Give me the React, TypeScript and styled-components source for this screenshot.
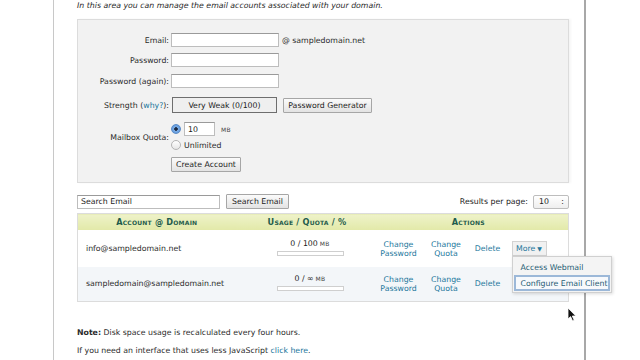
import React from 'react';
import styled, { createGlobalStyle } from 'styled-components';

interface Account {
  email: string;
  quota: string;
}

const accounts: Account[] = [
  { email: 'info@sampledomain.net', quota: '100' },
  { email: 'sampledomain@sampledomain.net', quota: '∞' },
];

const GlobalStyle = createGlobalStyle`
  html, body {
    margin: 0;
    padding: 0;
    background: #ffffff;
  }
  body {
    font-family: "DejaVu Sans", Verdana, sans-serif;
    font-size: 7.8px;
    color: #222;
  }
`;

const Page = styled.div`
  position: relative;
  margin-left: 53px;
  width: 492px;
  min-height: 360px;
  padding: 0 15px 0 23px;
  border-left: 1px solid #c8c8c8;
  border-right: 2px solid #a8a8a8;
`;

const Intro = styled.p`
  margin: 0;
  padding-top: 1px;
  height: 18px;
  font-style: italic;
  color: #2a2a2a;
`;

const FormBox = styled.div`
  box-sizing: border-box;
  height: 164px;
  background: #f2f2f2;
  border: 1px solid #dcdcdc;
  box-shadow: 2px 0 2px rgba(0, 0, 0, 0.04);
  padding-top: 10px;
  display: grid;
  grid-template-columns: 91px 1fr;
  column-gap: 2px;
  align-content: start;
`;

const Label = styled.div<{ $h: number }>`
  height: ${p => p.$h}px;
  display: flex;
  align-items: center;
  justify-content: flex-end;
  color: #2a2a2a;
`;

const Field = styled.div<{ $h: number }>`
  height: ${p => p.$h}px;
  display: flex;
  align-items: center;
  gap: 3px;
`;

const Input = styled.div<{ $w: number }>`
  box-sizing: border-box;
  width: ${p => p.$w}px;
  height: 14px;
  background: #fff;
  border: 1px solid #bdbdbd;
  border-top-color: #9a9a9a;
  padding-left: 3px;
  display: flex;
  align-items: center;
  color: #222;
`;

const Domain = styled.span`
  color: #2a2a2a;
`;

const Link = styled.a`
  color: #23779c;
  text-decoration: none;
`;

const StrengthBox = styled.div`
  box-sizing: border-box;
  width: 105px;
  height: 16px;
  margin-left: 1px;
  margin-right: 3px;
  border: 1px solid #6e6e6e;
  background: #efefef;
  display: flex;
  align-items: center;
  justify-content: center;
  color: #222;
`;

const Button = styled.div<{ $w: number }>`
  box-sizing: border-box;
  width: ${p => p.$w}px;
  height: 15px;
  background: linear-gradient(#fbfbfb, #e3e3e3);
  border: 1px solid #a6a6a6;
  border-radius: 1px;
  display: flex;
  align-items: center;
  justify-content: center;
  color: #222;
  white-space: nowrap;
`;

const QuotaOptions = styled.div`
  height: 38px;
  display: flex;
  flex-direction: column;
  justify-content: center;
  gap: 2px;
`;

const RadioRow = styled.div`
  display: flex;
  align-items: center;
  height: 14px;
  gap: 3px;
  color: #2a2a2a;
`;

const Radio = styled.span<{ $on?: boolean }>`
  box-sizing: border-box;
  width: 10px;
  height: 10px;
  border-radius: 50%;
  border: 1px solid ${p => (p.$on ? '#5a8cc8' : '#b4b4b4')};
  background: ${p =>
    p.$on
      ? 'radial-gradient(circle, #1d2a40 0 1.5px, #7fb0e8 2px, #4f8ad4 100%)'
      : 'linear-gradient(#ffffff, #e6e6e6)'};
`;

const SmallCaps = styled.span`
  font-size: 6px;
  letter-spacing: 0.3px;
  color: #444;
  margin-left: 3px;
`;

const ToolRow = styled.div`
  display: flex;
  align-items: center;
  height: 15px;
  margin-top: 11px;
  gap: 6px;
`;

const Spacer = styled.div`
  flex: 1;
`;

const Select = styled.div`
  box-sizing: border-box;
  width: 36px;
  height: 14px;
  border: 1px solid #bdbdbd;
  border-radius: 2px;
  background: linear-gradient(#fff, #eee);
  display: flex;
  align-items: center;
  justify-content: space-between;
  padding: 0 4px 0 5px;
  margin-left: -1px;
`;

const Table = styled.table`
  width: 100%;
  margin-top: 4px;
  border-collapse: collapse;
  border: 1px solid #dcdcdc;
  table-layout: fixed;

  th {
    height: 16px;
    padding: 0;
    background: linear-gradient(#eef2c9, #e2e9a8);
    color: #1f5c4c;
    font-weight: bold;
    font-variant: small-caps;
    font-size: 8.2px;
    letter-spacing: 0.2px;
    text-align: center;
  }

  th:last-child {
    padding-right: 10px;
  }

  td {
    padding: 0;
    vertical-align: middle;
  }

  tbody tr:nth-child(1) {
    height: 37px;
    background: #fff;
  }

  tbody tr:nth-child(2) {
    height: 34px;
    background: #f3f6f9;
  }
`;

const AccountCell = styled.td`
  padding-left: 8px !important;
  color: #2a2a2a;
`;

const Usage = styled.div`
  display: flex;
  flex-direction: column;
  align-items: center;
  gap: 3px;
  margin-top: -3px;
  padding-left: 6px;
`;

const UsageBar = styled.div`
  box-sizing: border-box;
  width: 67px;
  height: 5px;
  border: 1px solid #cfcfcf;
  background: #fff;
`;

const Actions = styled.div`
  display: flex;
  align-items: center;
  padding-left: 1px;
`;

const ActionLink = styled.a<{ $w: number }>`
  width: ${p => p.$w}px;
  color: #23779c;
  text-align: center;
  line-height: 9px;
  text-decoration: none;
`;

const MoreWrap = styled.div`
  position: relative;
  margin-left: 11px;
`;

const MoreButton = styled.div`
  box-sizing: border-box;
  width: 35px;
  height: 15px;
  background: #f1f1f1;
  border: 1px solid #d2d2d2;
  color: #23779c;
  display: flex;
  align-items: center;
  justify-content: center;
  gap: 2px;
`;

const Menu = styled.div`
  position: absolute;
  top: 15px;
  left: 0;
  z-index: 2;
  box-sizing: border-box;
  width: 100px;
  padding: 2px 1px 1px;
  background: #f4f4f4;
  border: 1px solid #d0d0d0;
  box-shadow: 1px 1px 3px rgba(0, 0, 0, 0.15);
`;

const MenuItem = styled.div<{ $active?: boolean }>`
  box-sizing: border-box;
  height: 16px;
  padding-left: ${p => (p.$active ? '5px' : '7px')};
  display: flex;
  align-items: center;
  color: #1f5c73;
  white-space: nowrap;
  border: ${p => (p.$active ? '2px solid #9cb8d8' : 'none')};
  background: ${p => (p.$active ? '#f7f9fc' : 'transparent')};
`;

const Footer = styled.div`
  margin-top: 22px;
  color: #2a2a2a;
  line-height: 18px;
`;

const Cursor = styled.svg`
  position: absolute;
  left: 513px;
  top: 307px;
`;

const Triangle = styled.span`
  font-size: 6px;
`;

const App: React.FC = () => {
  return (
    <>
      <GlobalStyle />
      <Page>
        <Intro>In this area you can manage the email accounts associated with your domain.</Intro>

        <FormBox>
          <Label $h={20}>Email:</Label>
          <Field $h={20}>
            <Input $w={108} />
            <Domain>@ sampledomain.net</Domain>
          </Field>

          <Label $h={20}>Password:</Label>
          <Field $h={20}>
            <Input $w={108} />
          </Field>

          <Label $h={22}>Password (again):</Label>
          <Field $h={22}>
            <Input $w={108} />
          </Field>

          <Label $h={26}>
            Strength (<Link>why?</Link>):
          </Label>
          <Field $h={26}>
            <StrengthBox>Very Weak (0/100)</StrengthBox>
            <Button $w={89}>Password Generator</Button>
          </Field>

          <Label $h={38}>Mailbox Quota:</Label>
          <QuotaOptions>
            <RadioRow>
              <Radio $on />
              <Input $w={31}>10</Input>
              <SmallCaps>MB</SmallCaps>
            </RadioRow>
            <RadioRow>
              <Radio />
              Unlimited
            </RadioRow>
          </QuotaOptions>

          <div />
          <Field $h={17}>
            <Button $w={70}>Create Account</Button>
          </Field>
        </FormBox>

        <ToolRow>
          <Input $w={143}>Search Email</Input>
          <Button $w={63}>Search Email</Button>
          <Spacer />
          <span>Results per page:</span>
          <Select>
            <span>10</span>
            <span>:</span>
          </Select>
        </ToolRow>

        <Table>
          <colgroup>
            <col style={{ width: 158 }} />
            <col style={{ width: 143 }} />
            <col />
          </colgroup>
          <thead>
            <tr>
              <th>Account @ Domain</th>
              <th>Usage / Quota / %</th>
              <th>Actions</th>
            </tr>
          </thead>
          <tbody>
            {accounts.map((a, i) => (
              <tr key={a.email}>
                <AccountCell>{a.email}</AccountCell>
                <td>
                  <Usage>
                    <span>
                      0 / {a.quota}
                      <SmallCaps style={{ marginLeft: 2 }}>MB</SmallCaps>
                    </span>
                    <UsageBar />
                  </Usage>
                </td>
                <td>
                  <Actions>
                    <ActionLink $w={38}>
                      Change
                      <br />
                      Password
                    </ActionLink>
                    <ActionLink $w={57}>
                      Change
                      <br />
                      Quota
                    </ActionLink>
                    <ActionLink $w={26}>Delete</ActionLink>
                    {i === 0 && (
                      <MoreWrap>
                        <MoreButton>
                          More <Triangle>▼</Triangle>
                        </MoreButton>
                        <Menu>
                          <MenuItem>Access Webmail</MenuItem>
                          <MenuItem $active>Configure Email Client</MenuItem>
                        </Menu>
                      </MoreWrap>
                    )}
                  </Actions>
                </td>
              </tr>
            ))}
          </tbody>
        </Table>

        <Footer>
          <div>
            <b>Note:</b> Disk space usage is recalculated every four hours.
          </div>
          <div>
            If you need an interface that uses less JavaScript <Link>click here</Link>.
          </div>
        </Footer>

        <Cursor width="10" height="15" viewBox="0 0 10 15">
          <path d="M1 1 L1 12 L3.6 9.6 L5.6 14 L7.2 13.3 L5.3 9 L8.8 9 Z" fill="#111" stroke="#fff" strokeWidth="0.8" />
        </Cursor>
      </Page>
    </>
  );
};

export default App;
